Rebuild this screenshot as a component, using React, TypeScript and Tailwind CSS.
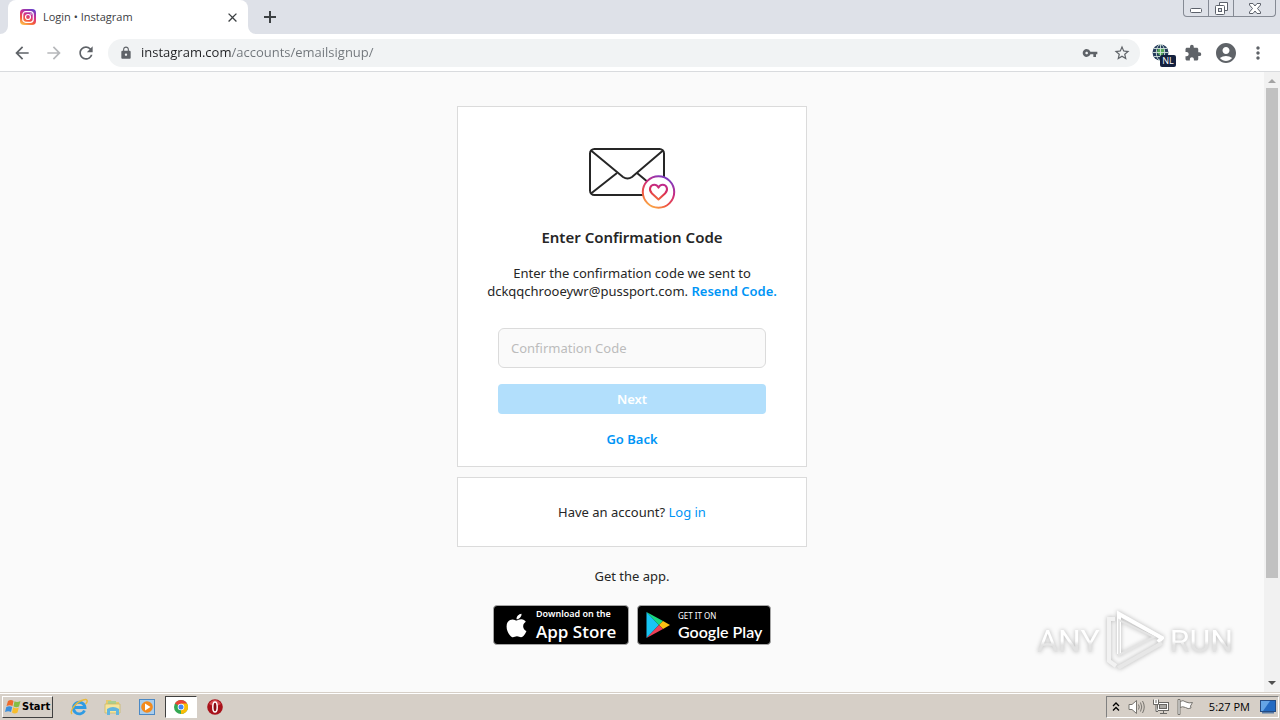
import type { ReactNode } from 'react';
import {
  MdAccountCircle,
  MdArrowBack,
  MdArrowForward,
  MdClose,
  MdExtension,
  MdLock,
  MdMoreVert,
  MdOutlineStarBorder,
  MdRefresh,
  MdVpnKey,
} from 'react-icons/md';
import { FaApple } from 'react-icons/fa';

function InstagramIcon() {
  return (
    <svg width="16" height="16" viewBox="0 0 16 16" aria-hidden="true">
      <defs>
        <linearGradient id="ig-tab" x1="0.2" y1="1" x2="0.7" y2="0">
          <stop offset="0" stopColor="#fdc24c" />
          <stop offset="0.35" stopColor="#f4553c" />
          <stop offset="0.65" stopColor="#cd2f92" />
          <stop offset="1" stopColor="#6b3fc8" />
        </linearGradient>
      </defs>
      <rect width="16" height="16" rx="4" fill="url(#ig-tab)" />
      <rect x="2.7" y="2.7" width="10.6" height="10.6" rx="3" fill="none" stroke="#fff" strokeWidth="1.2" />
      <circle cx="8" cy="8" r="2.5" fill="none" stroke="#fff" strokeWidth="1.2" />
      <circle cx="11" cy="5" r="0.7" fill="#fff" />
    </svg>
  );
}

function TabStrip() {
  return (
    <div className="flex h-[34px] shrink-0 items-start justify-between bg-[#dee1e8] pl-2">
      <div className="flex h-full items-center">
        <div className="relative flex h-full w-60 items-center rounded-t-lg bg-white px-3">
          <svg className="absolute bottom-0 -left-2" width="8" height="8" aria-hidden="true">
            <path d="M8 0V8H0A8 8 0 0 0 8 0Z" fill="#fff" />
          </svg>
          <svg className="absolute -right-2 bottom-0" width="8" height="8" aria-hidden="true">
            <path d="M0 0V8H8A8 8 0 0 1 0 0Z" fill="#fff" />
          </svg>
          <InstagramIcon />
          <span className="ml-[7px] flex-1 text-[11px] text-[#3c4043]">Login • Instagram</span>
          <button aria-label="Close tab" className="-mr-1 text-[#3c4043]">
            <MdClose size={15} />
          </button>
        </div>
        <button aria-label="New tab" className="ml-4 text-[#3c4043]">
          <svg width="12" height="12" viewBox="0 0 12 12" aria-hidden="true">
            <path d="M6 0V12M0 6H12" stroke="currentColor" strokeWidth="2" />
          </svg>
        </button>
      </div>
      <div className="mr-1 flex h-[17px] rounded-b border border-t-0 border-[#858a94]">
        <button aria-label="Minimize" className="flex w-[25px] items-end justify-center border-r border-[#858a94] pb-[3px]">
          <svg width="12" height="5" aria-hidden="true">
            <rect x="0.5" y="0.5" width="11" height="4" rx="1" fill="#fff" stroke="#5c616b" />
          </svg>
        </button>
        <button aria-label="Restore" className="flex w-[25px] items-center justify-center border-r border-[#858a94]">
          <svg width="13" height="13" aria-hidden="true">
            <path d="M4.5 3.5V0.5H12.5V8.5H9.5" fill="#fff" stroke="#5c616b" />
            <rect x="0.5" y="3.5" width="9" height="9" rx="1" fill="#fff" stroke="#5c616b" />
            <rect x="3.5" y="6.5" width="3" height="3" fill="#dee1e8" stroke="#5c616b" />
          </svg>
        </button>
        <button aria-label="Close" className="flex w-[41px] items-center justify-center">
          <svg width="12" height="11" viewBox="0 0 12 11" aria-hidden="true">
            <path
              d="M0.5 0.5H4L6 3L8 0.5H11.5V2L8.5 5.5L11.5 9V10.5H8L6 8L4 10.5H0.5V9L3.5 5.5L0.5 2Z"
              fill="#fff"
              stroke="#5c616b"
            />
          </svg>
        </button>
      </div>
    </div>
  );
}

function ExtensionGlobe() {
  return (
    <button aria-label="Location NL" className="relative flex h-6 w-6 items-center">
      <svg width="17" height="17" viewBox="0 0 17 17" aria-hidden="true">
        <circle cx="8.5" cy="8.5" r="8" fill="#253b5c" />
        <path d="M6 5L9 4L12 5V8L10 12L7 11L5 8Z" fill="#57a85a" />
        <g fill="none" stroke="#d3e4dc" strokeWidth="0.9">
          <path d="M8.5 0.5V16.5M0.5 8.5H16.5M2 4.5H15M2 12.5H15" />
          <ellipse cx="8.5" cy="8.5" rx="4.2" ry="8" />
        </g>
      </svg>
      <span className="absolute top-[14px] left-2 h-3 w-4 rounded-xs bg-[#14213f] text-center text-[9px] leading-3 text-white">
        NL
      </span>
    </button>
  );
}

function Toolbar() {
  return (
    <div className="flex h-[38px] shrink-0 items-center border-b border-[#d9dbde] bg-white px-3 text-[#5f6368]">
      <div className="flex items-center gap-3">
        <button aria-label="Back">
          <MdArrowBack size={20} />
        </button>
        <button aria-label="Forward" className="text-[#b6b8bb]">
          <MdArrowForward size={20} />
        </button>
        <button aria-label="Reload">
          <MdRefresh size={20} />
        </button>
      </div>
      <div className="ml-3 flex h-7 flex-1 items-center rounded-full bg-[#f1f3f4] pr-[9px] pl-[11px]">
        <MdLock size={14} />
        {/* host part of the address is darker than the path */}
        <input
          aria-label="Address"
          defaultValue="instagram.com/accounts/emailsignup/"
          className="ml-2 min-w-0 flex-1 bg-[linear-gradient(90deg,#202124_91px,#70757a_91px)] bg-clip-text text-[13px] text-transparent outline-none"
        />
        <div className="flex items-center gap-[15px]">
          <button aria-label="Saved passwords">
            <MdVpnKey size={16} />
          </button>
          <button aria-label="Bookmark this page">
            <MdOutlineStarBorder size={18} />
          </button>
        </div>
      </div>
      <div className="ml-3 flex items-center gap-2">
        <ExtensionGlobe />
        <button aria-label="Extensions">
          <MdExtension size={18} />
        </button>
        <button aria-label="Profile" className="ml-1">
          <MdAccountCircle size={24} />
        </button>
        <button aria-label="Menu" className="ml-[2px]">
          <MdMoreVert size={20} />
        </button>
      </div>
    </div>
  );
}

function EnvelopeIllustration() {
  return (
    <svg width="88" height="62" viewBox="0 0 88 62" aria-hidden="true">
      <defs>
        <linearGradient id="ring" x1="0.15" y1="1" x2="0.7" y2="0">
          <stop offset="0" stopColor="#fdc04a" />
          <stop offset="0.3" stopColor="#f0553f" />
          <stop offset="0.65" stopColor="#cc2a7e" />
          <stop offset="1" stopColor="#7a3bc4" />
        </linearGradient>
        <linearGradient id="heart" x1="0.3" y1="1" x2="0.6" y2="0">
          <stop offset="0" stopColor="#f26b3a" />
          <stop offset="0.5" stopColor="#dd3050" />
          <stop offset="1" stopColor="#c02a8c" />
        </linearGradient>
      </defs>
      <g fill="none" stroke="#262626" strokeWidth="2">
        <rect x="2" y="2" width="74" height="46" rx="4.5" />
        <path d="M3 3.5L35 30Q39.5 33 44 30L75 3.5" />
        <path d="M3 46.5L29 26M49 26L61 36" />
      </g>
      <circle cx="70.5" cy="45" r="15.7" fill="#fff" stroke="url(#ring)" strokeWidth="2" />
      <path
        d="M70.5 52.5L64 46.5C60 42.5 62.5 37.8 66.3 37.8C68.4 37.8 69.6 39 70.5 40.6C71.4 39 72.6 37.8 74.7 37.8C78.5 37.8 81 42.5 77 46.5Z"
        fill="none"
        stroke="url(#heart)"
        strokeWidth="2"
        strokeLinejoin="round"
      />
    </svg>
  );
}

function PlayIcon() {
  return (
    <svg width="24" height="28" viewBox="0 0 24 28" aria-hidden="true">
      <path d="M0.5 1V27L13 14Z" fill="#18c5f4" />
      <path d="M0.5 1L17 10L13 14Z" fill="#19d980" />
      <path d="M17 10L24 14L17 18L13 14Z" fill="#fdc112" />
      <path d="M0.5 27L17 18L13 14Z" fill="#ef3f57" />
    </svg>
  );
}

interface StoreBadgeProps {
  icon: ReactNode;
  kicker: ReactNode;
  name: ReactNode;
  className: string;
}

function StoreBadge({ icon, kicker, name, className }: StoreBadgeProps) {
  return (
    <a href="#" className={`flex h-10 items-center rounded border border-[#a6a6a6] bg-black text-white ${className}`}>
      {icon}
      <span className="flex flex-col whitespace-nowrap">
        {kicker}
        {name}
      </span>
    </a>
  );
}

function SignupPage() {
  return (
    <main className="flex flex-1 flex-col items-center bg-[#fafafa] pt-[34px] font-['Noto_Sans','Open_Sans',sans-serif] text-[13px] leading-[18px] text-[#262626]">
      <form
        className="flex w-full max-w-[350px] flex-col items-center border border-[#dbdbdb] bg-white px-10 pt-10 pb-[18px]"
        onSubmit={(e) => e.preventDefault()}
      >
        <EnvelopeIllustration />
        <h1 className="mt-4 text-[15px] leading-6 font-semibold">Enter Confirmation Code</h1>
        <p className="-mx-4 mt-[15px] text-center">
          Enter the confirmation code we sent to
          <br />
          dckqqchrooeywr@pussport.com.{' '}
          <a href="#" className="font-semibold text-[#0095f6]">
            Resend Code.
          </a>
        </p>
        <input
          aria-label="Confirmation Code"
          placeholder="Confirmation Code"
          className="mt-7 h-10 w-full rounded-md border border-[#dbdbdb] bg-[#fafafa] px-3 placeholder:text-[#bcbcbc]"
        />
        <button type="submit" className="mt-4 h-[30px] w-full rounded bg-[#b2dffc] font-semibold text-white">
          Next
        </button>
        <button type="button" className="mt-4 font-semibold text-[#0095f6]">
          Go Back
        </button>
      </form>
      <p className="mt-[10px] w-full max-w-[350px] border border-[#dbdbdb] bg-white py-[25px] text-center">
        Have an account?{' '}
        <a href="#" className="text-[#0095f6]">
          Log in
        </a>
      </p>
      <p className="mt-5">Get the app.</p>
      <div className="mt-5 flex gap-2">
        <StoreBadge
          className="w-34 gap-[6px] pl-[9px]"
          icon={<FaApple size={27} />}
          kicker={<span className="text-[9px] leading-[13px] font-semibold">Download on the</span>}
          name={<span className="font-['Open_Sans',sans-serif] text-[17px] leading-[23px] font-semibold">App Store</span>}
        />
        <StoreBadge
          className="w-[134px] gap-2 pl-2"
          icon={<PlayIcon />}
          kicker={<span className="text-[8px] leading-[13px]">GET IT ON</span>}
          name={<span className="font-[Lato,sans-serif] text-[16px] leading-5 font-semibold">Google Play</span>}
        />
      </div>
    </main>
  );
}

function Scrollbar() {
  return (
    <div className="flex w-4 shrink-0 flex-col items-center justify-between bg-[#f1f1f1]">
      <svg width="16" height="16" aria-hidden="true">
        <path d="M4 11L8 7L12 11Z" fill="#a3a3a3" />
      </svg>
      <div className="mb-auto h-[79%] w-3 bg-[#c1c1c1]" />
      <svg width="16" height="17" aria-hidden="true">
        <path d="M4 6L8 10L12 6Z" fill="#505050" />
      </svg>
    </div>
  );
}

function Watermark() {
  return (
    <div className="absolute right-[47px] bottom-5 flex items-center gap-[6px] font-[Roboto,sans-serif] text-[32px] leading-10 drop-shadow-[0_0_2px_#b4b4b4]">
      <span className="bg-linear-to-b from-white from-50% to-[#e2e2e2] to-60% bg-clip-text text-transparent">ANY</span>
      <svg width="58" height="62" viewBox="0 0 58 62" aria-hidden="true">
        <g fill="none" stroke="#fff" strokeWidth="4">
          <path d="M13 44V4L56 28L52 32" />
          <path d="M9 9H3V51L10 56" stroke="#f2f2f2" />
          <path d="M13 10V45L48 27Z" stroke="#e4e4e4" strokeWidth="2" />
          <path d="M12 58L56 33" stroke="#e7e7e7" />
        </g>
      </svg>
      <span className="bg-linear-to-b from-white from-50% to-[#e2e2e2] to-60% bg-clip-text text-transparent">RUN</span>
    </div>
  );
}

function StartLogo() {
  return (
    <svg width="16" height="15" viewBox="0 0 16 15" aria-hidden="true">
      <path d="M3 2Q6 0 8.5 2L7.5 7Q5 5.5 1.5 7Z" fill="#ee6b2d" />
      <path d="M9.5 2.3Q12 4 15.5 2L14 7.5Q11 9 8.5 7.3Z" fill="#84bd45" />
      <path d="M1.3 8Q4.5 6.5 7.2 8L6 13Q3.5 11.5 0 13Z" fill="#3b8fdd" />
      <path d="M8.2 8.3Q11 10 13.8 8.5L12.5 13.5Q9.5 15.5 7 13.4Z" fill="#f7bd2c" />
    </svg>
  );
}

function IeIcon() {
  return (
    <svg width="18" height="18" viewBox="0 0 18 18" fill="none" aria-hidden="true">
      <path d="M14.5 12.5A5.8 5.8 0 1 1 15 9.5H5" stroke="#2f9be3" strokeWidth="2.8" />
      <path d="M2 16C-1 13 6 4 13 2C18 0 18 4 15.5 6" stroke="#e9b93c" strokeWidth="1.4" />
    </svg>
  );
}

function ExplorerIcon() {
  return (
    <svg width="18" height="18" viewBox="0 0 18 18" aria-hidden="true">
      <path d="M2 2H7L8 4H15V14H2Z" fill="#e5ca6d" />
      <path d="M4 3H12V12H4Z" fill="#a9cf91" />
      <path d="M1 6H16V15H1Z" fill="#f5e49b" stroke="#c8b45e" strokeWidth="0.7" />
      <path d="M3 17V11Q9 7 15 11V17H12V13H6V17Z" fill="#61b5df" />
    </svg>
  );
}

function MediaIcon() {
  return (
    <svg width="16" height="16" viewBox="0 0 16 16" aria-hidden="true">
      <rect x="0.5" y="0.5" width="15" height="15" fill="#a9cdec" stroke="#4b89c5" />
      <circle cx="8" cy="8" r="5.8" fill="#f38a1c" />
      <path d="M6 4.5L11.5 8L6 11.5Z" fill="#fff" />
    </svg>
  );
}

function ChromeIcon() {
  return (
    <svg width="14" height="14" viewBox="0 0 14 14" aria-hidden="true">
      <circle cx="7" cy="7" r="7" fill="#34a853" />
      <path d="M7 7L0.94 3.5A7 7 0 0 1 13.06 3.5Z" fill="#ea4335" />
      <path d="M7 7V3.5H13.06A7 7 0 0 1 7 14Z" fill="#fbbc05" />
      <circle cx="7" cy="7" r="3.3" fill="#fff" />
      <circle cx="7" cy="7" r="2.5" fill="#4285f4" />
    </svg>
  );
}

function OperaIcon() {
  return (
    <svg width="16" height="16" viewBox="0 0 16 16" aria-hidden="true">
      <circle cx="8" cy="8" r="7.8" fill="#a8121b" />
      <path d="M2 5Q8 -3 14 5Q8 9 2 5Z" fill="#d64b50" />
      <ellipse cx="8" cy="8" rx="2.2" ry="5" fill="#8a0b13" stroke="#fff" strokeWidth="1.5" />
    </svg>
  );
}

const launchers = [
  { label: 'Internet Explorer', icon: <IeIcon /> },
  { label: 'Windows Explorer', icon: <ExplorerIcon /> },
  { label: 'Media Player', icon: <MediaIcon /> },
  { label: 'Chrome', icon: <ChromeIcon />, active: true },
  { label: 'Opera', icon: <OperaIcon /> },
];

function Tray() {
  return (
    <div className="flex h-[22px] items-center gap-2 border border-t-[#808080] border-r-white border-b-white border-l-[#808080] pr-[2px] pl-[5px]">
      <svg width="8" height="10" viewBox="0 0 8 10" fill="none" stroke="#000" strokeWidth="1.3" aria-hidden="true">
        <path d="M1 4L4 1L7 4M1 8.5L4 5.5L7 8.5" />
      </svg>
      <svg width="17" height="16" viewBox="0 0 17 16" fill="none" stroke="#77746f" aria-hidden="true">
        <path d="M1 5.5H4L8.5 1.5V14.5L4 10.5H1Z" fill="#fff" />
        <path d="M10.5 5.5Q12 8 10.5 10.5M12.5 3.5Q15 8 12.5 12.5M14.5 2Q18 8 14.5 14" />
      </svg>
      <svg width="16" height="16" viewBox="0 0 16 16" fill="none" stroke="#686663" aria-hidden="true">
        <rect x="4.5" y="3.5" width="11" height="8" fill="#fff" />
        <rect x="6.5" y="5.5" width="7" height="4" fill="#aaa8a4" />
        <path d="M7 14.5H14M10.5 11.5V14.5" />
        <path d="M0.5 0.5V5.5H5.5V0.5M3 1V4M3 5.5V12.5H5" fill="#fff" />
      </svg>
      <svg width="16" height="16" viewBox="0 0 16 16" fill="#fff" stroke="#77746f" aria-hidden="true">
        <path d="M3 2.5Q6 0.5 9 3Q12 4.5 15.5 3.5L13.5 7L14 9Q11 10.5 8.5 8.5Q5.5 7 3 8.5Z" />
        <path d="M1 0.5H3V15.5H1Z" />
      </svg>
      <time className="ml-2 text-[11px] leading-4 text-black">5:27 PM</time>
      <svg className="ml-[2px]" width="16" height="14" viewBox="0 0 16 14" aria-hidden="true">
        <rect x="0.5" y="0.5" width="15" height="11" fill="#246bc2" stroke="#254c83" />
        <path d="M1 1H10L3 11H1Z" fill="#64a5e5" />
        <path d="M2 12H14V13.5H2Z" fill="#587aa5" />
      </svg>
    </div>
  );
}

function Taskbar() {
  return (
    <footer className="flex h-7 shrink-0 items-center justify-between border-t border-[#d6cfc7] bg-[#d6cfc7] pr-px pl-[2px] shadow-[inset_0_1px_0_#ffffff]">
      <nav className="flex items-center">
        <button className="mr-[9px] flex h-[22px] items-center gap-px border border-t-white border-r-[#404040] border-b-[#404040] border-l-white px-[2px] font-['DejaVu_Sans_Condensed','DejaVu_Sans',sans-serif] text-[11px] font-bold text-black">
          <StartLogo />
          <span className="pt-px">Start</span>
        </button>
        {launchers.map(({ label, icon, active }) => (
          <button
            key={label}
            aria-label={label}
            className={`mx-px flex h-[22px] w-8 items-center justify-center ${
              active ? 'border border-t-[#404040] border-r-white border-b-white border-l-[#404040] bg-white' : ''
            }`}
          >
            {icon}
          </button>
        ))}
      </nav>
      <Tray />
    </footer>
  );
}

function App() {
  return (
    <div className="flex h-screen flex-col overflow-hidden bg-[#fafafa] font-['Open_Sans',sans-serif]">
      <TabStrip />
      <Toolbar />
      <div className="relative flex flex-1">
        <SignupPage />
        <Scrollbar />
        <Watermark />
      </div>
      <Taskbar />
    </div>
  );
}

export default App;
